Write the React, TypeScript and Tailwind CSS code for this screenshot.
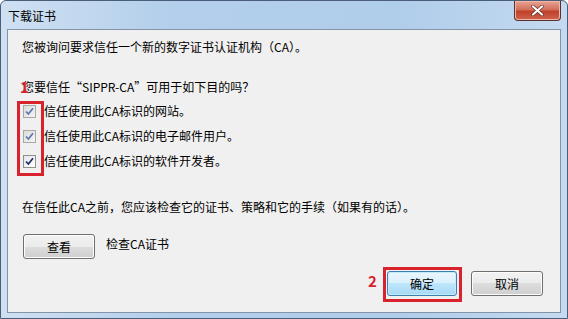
import React from 'react';

const font = { fontFamily: '"Microsoft YaHei", "Noto Sans CJK SC", "Noto Sans", sans-serif' };

function Check({ dim }: { dim?: boolean }) {
  return (
    <span
      className={
        'flex h-[13px] w-[13px] items-center justify-center border ' +
        (dim
          ? 'border-[#a8a8a8] bg-[linear-gradient(135deg,#dcdcdc,#f4f4f4)]'
          : 'border-[#8e8f8f] bg-[linear-gradient(135deg,#e4e6ea,#ffffff)]')
      }
    >
      <svg width="9" height="9" viewBox="0 0 9 9">
        <path
          d="M1 4.5 L3.4 7 L8 1.2"
          fill="none"
          stroke={dim ? '#5a78b0' : '#1c2d6b'}
          strokeWidth="1.7"
        />
      </svg>
    </span>
  );
}

function Button({ label, primary }: { label: string; primary?: boolean }) {
  return (
    <button
      className={
        'flex items-center justify-center rounded-[3px] border text-[12px] text-black ' +
        (primary
          ? 'h-[25px] w-[70px] border-[#3c7fb1] bg-[linear-gradient(#eaf6fd_0%,#d9f0fc_50%,#bee6fd_50%,#a7d9f5_100%)] shadow-[inset_0_0_0_1px_#c5ecfc]'
          : 'h-[25px] w-[72px] border-[#707070] bg-[linear-gradient(#f2f2f2_0%,#ebebeb_50%,#dddddd_50%,#cfcfcf_100%)] shadow-[inset_0_0_0_1px_#fcfcfc]')
      }
      style={font}
    >
      {label}
    </button>
  );
}

export default function App() {
  return (
    <div className="h-[319px] w-[568px] overflow-hidden bg-white" style={font}>
      <div className="relative flex h-[319px] w-[568px] flex-col rounded-t-[6px] border border-[#4b5e77] bg-[linear-gradient(90deg,#cfe0f2_0%,#b3cfeb_30%,#b0cdea_70%,#c4daf0_100%)]">
        {/* title bar */}
        <div className="flex h-[28px] shrink-0 items-start">
          <span className="ml-[7px] mt-[7px] text-[12px] leading-[16px] text-black">下载证书</span>
          <div className="ml-auto mr-[6px] flex h-[20px] w-[47px] items-center justify-center rounded-b-[4px] border border-t-0 border-[#5b2f2f] bg-[linear-gradient(#e8a493_0%,#d2705b_45%,#c0412b_55%,#d0634c_100%)] shadow-[inset_0_0_0_1px_#f0b7a8]">
            <svg width="13" height="11" viewBox="0 0 13 11">
              <path d="M2 1.5 L11 9.5 M11 1.5 L2 9.5" stroke="#5a2a20" strokeWidth="3.4" strokeLinecap="round" />
              <path d="M2 1.5 L11 9.5 M11 1.5 L2 9.5" stroke="#ffffff" strokeWidth="2.2" strokeLinecap="round" />
            </svg>
          </div>
        </div>

        {/* client area */}
        <div className="relative mx-[6px] flex h-[284px] flex-col border border-[#8393a8] bg-[#f0f0f0] pl-[14px] pr-[17px] text-[12px] leading-[16px] text-black">
          <p className="mt-[9px]">您被询问要求信任一个新的数字证书认证机构（CA）。</p>
          <p className="mt-[24px]">您要信任“SIPPR-CA”可用于如下目的吗？</p>

          <div className="mt-[8px] flex flex-col gap-[9px]">
            <label className="flex h-[16px] items-center gap-[8px] pl-[1px]">
              <Check dim />
              <span>信任使用此CA标识的网站。</span>
            </label>
            <label className="flex h-[16px] items-center gap-[8px] pl-[1px]">
              <Check dim />
              <span>信任使用此CA标识的电子邮件用户。</span>
            </label>
            <label className="flex h-[16px] items-center gap-[8px] pl-[1px]">
              <Check />
              <span>信任使用此CA标识的软件开发者。</span>
            </label>
          </div>

          <p className="mt-[30px]">在信任此CA之前，您应该检查它的证书、策略和它的手续（如果有的话）。</p>

          <div className="mt-[19px] flex items-start gap-[11px] pl-[1px]">
            <Button label="查看" />
            <span className="mt-[2px]">检查CA证书</span>
          </div>

          <div className="mt-[12px] flex justify-end gap-[14px]">
            <Button label="确定" primary />
            <Button label="取消" />
          </div>

          {/* annotations */}
          <span className="absolute left-[12px] top-[49px] text-[15px] font-bold leading-[16px] text-[#d8232c]">1</span>
          <div className="absolute left-[9px] top-[71px] h-[75px] w-[27px] border-[3px] border-[#d8232c]" />
          <span className="absolute left-[360px] top-[243px] text-[15px] font-bold leading-[16px] text-[#d8232c]">2</span>
          <div className="absolute left-[375px] top-[237px] h-[35px] w-[79px] border-[3px] border-[#d8232c]" />
        </div>
      </div>
    </div>
  );
}
